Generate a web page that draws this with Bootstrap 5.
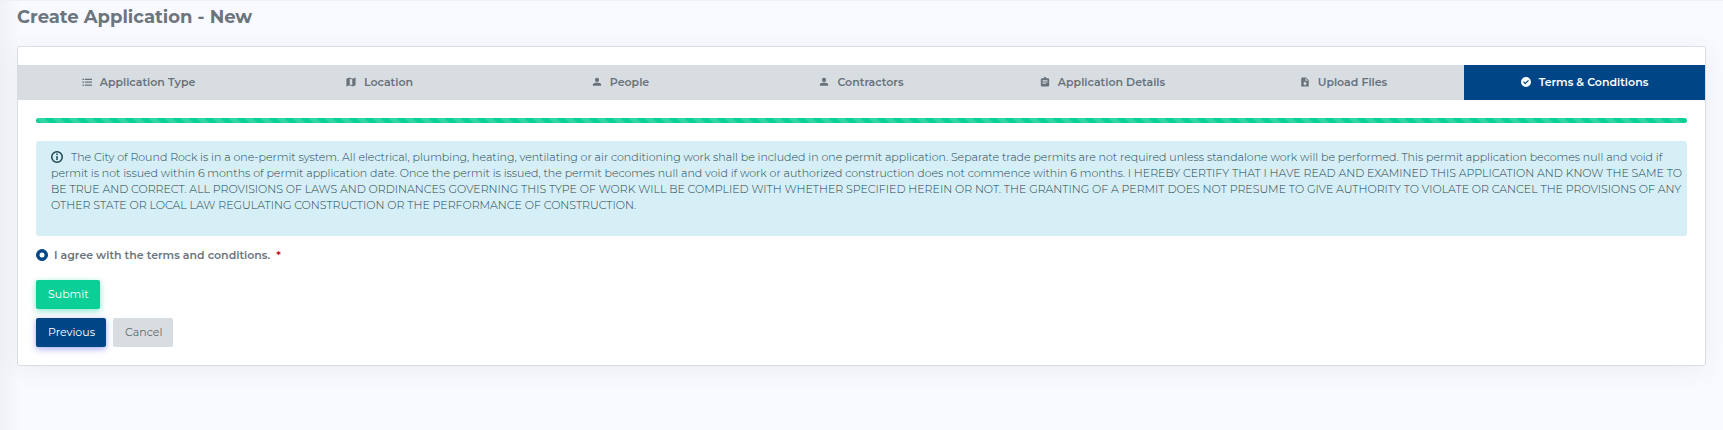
<!DOCTYPE html>
<html lang="en">
<head>
<meta charset="utf-8">
<meta name="viewport" content="width=device-width, initial-scale=1">
<title>Create Application - New</title>
<link href="https://cdn.jsdelivr.net/npm/bootstrap@5.3.0/dist/css/bootstrap.min.css" rel="stylesheet">
<style>
  body {
    font-family: Montserrat, Inter, "Open Sans", sans-serif;
    font-size: 11px;
    line-height: 16px;
    color: #6b757e;
    background: linear-gradient(90deg, #f0f1f5 0, #f9faff 20px);
    border-top: 1px solid #eff0f5;
    min-height: 100vh;
  }
  .page-wrap { padding: 0 17px; }
  .page-title { font-size: 18px; line-height: 24px; font-weight: 700; padding-top: 4px; margin-bottom: 17px; }
  .wizard-card {
    --bs-card-border-color: #d8dde1;
    --bs-card-border-radius: 3px;
    box-shadow: 0 4px 24px rgba(60, 70, 100, .07);
    color: inherit;
    padding: 18px 0;
  }
  .wizard-tabs { background: #d8dde1; }
  .wizard-tabs .nav-link {
    display: flex; align-items: center; justify-content: center;
    height: 35px; padding: 0 0 2px; border-radius: 0;
    color: #68727b; font-weight: 600; white-space: nowrap;
  }
  .wizard-tabs .nav-link.active { background: #004586; color: #fff; }
  .wizard-tabs svg { width: 10px; height: 10px; margin-right: 8px; fill: currentColor; }
  .wizard-body { padding: 18px 18px 0; }
  .progress { height: 5px; border-radius: 3px; margin-bottom: 18px; }
  .progress-bar { background-color: #0acf97; background-size: 16px 16px; }
  .terms-note {
    background: #d6eef5; color: #1b4551; border: 0; border-radius: 3px;
    padding: 8px 0 23px 15px; margin-bottom: 11px; font-weight: 300;
  }
  .terms-note svg { width: 12px; height: 12px; margin-right: 8px; vertical-align: -2px; }
  .agree-row { gap: 6px; margin-bottom: 17px; font-weight: 600; }
  .agree-row .form-check-input { width: 12px; height: 12px; margin: 0; border-color: #004586; }
  .agree-row .form-check-input:checked { background-color: #004586; }
  .required-mark { color: #d00b1c; }
  .button-stack { display: grid; gap: 9px; }
  .button-row { display: flex; gap: 7px; }
  .wizard-body .btn { font-size: 11px; line-height: 16px; font-weight: 400; padding: 5px 10px 6px 11px; border-radius: 2px; border: 1px solid transparent; }
  .btn-send { background: #0acf97; color: #fff; box-shadow: 0 2px 6px rgba(10, 207, 151, .5); }
  .btn-back { background: #004586; color: #fff; box-shadow: 0 2px 6px rgba(80, 90, 230, .5); }
  .btn-drop { background: #d8dde1; color: #5f6970; }
</style>
</head>
<body>
<main class="container-fluid page-wrap">
  <h1 class="page-title">Create Application - New</h1>
  <form class="card wizard-card">
    <nav class="nav nav-pills nav-justified wizard-tabs" aria-label="Application steps">
      <a class="nav-link" href="#type"><svg viewBox="0 0 24 24"><path d="M1 4h4v3H1zm0 7h4v3H1zm0 7h4v3H1zM7 4h17v3H7zm0 7h17v3H7zm0 7h17v3H7z"/></svg>Application Type</a>
      <a class="nav-link" href="#location"><svg viewBox="0 0 24 24"><path d="M1 4l7-3 8 3 7-3v19l-7 3-8-3-7 3zm8 0v14l6 2V6z" fill-rule="evenodd"/></svg>Location</a>
      <a class="nav-link" href="#people"><svg viewBox="0 0 24 24"><circle cx="12" cy="7" r="5"/><path d="M2 21v-3c0-3 6-5 10-5s10 2 10 5v3z"/></svg>People</a>
      <a class="nav-link" href="#contractors"><svg viewBox="0 0 24 24"><circle cx="12" cy="7" r="5"/><path d="M2 21v-3c0-3 6-5 10-5s10 2 10 5v3z"/></svg>Contractors</a>
      <a class="nav-link" href="#details"><svg viewBox="0 0 24 24"><path fill-rule="evenodd" d="M4 3h5a3 3 0 0 1 6 0h5l2 2v16l-2 2H4l-2-2V5zm2 4v2h12V7zm0 4v2h12v-2zm0 4v2h8v-2z"/></svg>Application Details</a>
      <a class="nav-link" href="#files"><svg viewBox="0 0 24 24"><path fill-rule="evenodd" d="M5 1h9l7 7v15H3V3zm8 2v6h6zm-1 8l-5 5h3v4h4v-4h3z"/></svg>Upload Files</a>
      <a class="nav-link active" aria-current="step" href="#terms"><svg viewBox="0 0 24 24"><path fill-rule="evenodd" d="M12 0a12 12 0 1 1 0 24 12 12 0 0 1 0-24zM5 12l5 6 9-9-2-2-7 7-3-4z"/></svg>Terms &amp; Conditions</a>
    </nav>
    <div class="wizard-body">
      <div class="progress" role="progressbar" aria-label="Progress" aria-valuenow="100" aria-valuemin="0" aria-valuemax="100">
        <div class="progress-bar progress-bar-striped w-100"></div>
      </div>
      <div class="alert terms-note"><svg viewBox="0 0 24 24" fill="none" stroke="currentColor" stroke-width="3"><circle cx="12" cy="12" r="10.5"/><path d="M12 5v3m0 2v8"/></svg>The City of Round Rock is in a one-permit system. All electrical, plumbing, heating, ventilating or air conditioning work shall be included in one permit application. Separate trade permits are not required unless standalone work will be performed. This permit application becomes null and void if<br>
        permit is not issued within 6 months of permit application date. Once the permit is issued, the permit becomes null and void if work or authorized construction does not commence within 6 months. I HEREBY CERTIFY THAT I HAVE READ AND EXAMINED THIS APPLICATION AND KNOW THE SAME TO<br>
        BE TRUE AND CORRECT. ALL PROVISIONS OF LAWS AND ORDINANCES GOVERNING THIS TYPE OF WORK WILL BE COMPLIED WITH WHETHER SPECIFIED HEREIN OR NOT. THE GRANTING OF A PERMIT DOES NOT PRESUME TO GIVE AUTHORITY TO VIOLATE OR CANCEL THE PROVISIONS OF ANY<br>
        OTHER STATE OR LOCAL LAW REGULATING CONSTRUCTION OR THE PERFORMANCE OF CONSTRUCTION.</div>
      <div class="d-flex align-items-center agree-row">
        <input class="form-check-input" type="radio" id="agree" name="agree" checked>
        <label for="agree">I agree with the terms and conditions. &nbsp;<span class="required-mark">*</span></label>
      </div>
      <div class="button-stack">
        <div class="button-row"><button type="submit" class="btn btn-send">Submit</button></div>
        <div class="button-row">
          <button type="button" class="btn btn-back">Previous</button>
          <button type="button" class="btn btn-drop">Cancel</button>
        </div>
      </div>
    </div>
  </form>
</main>
<script src="https://cdn.jsdelivr.net/npm/bootstrap@5.3.0/dist/js/bootstrap.bundle.min.js"></script>
</body>
</html>
